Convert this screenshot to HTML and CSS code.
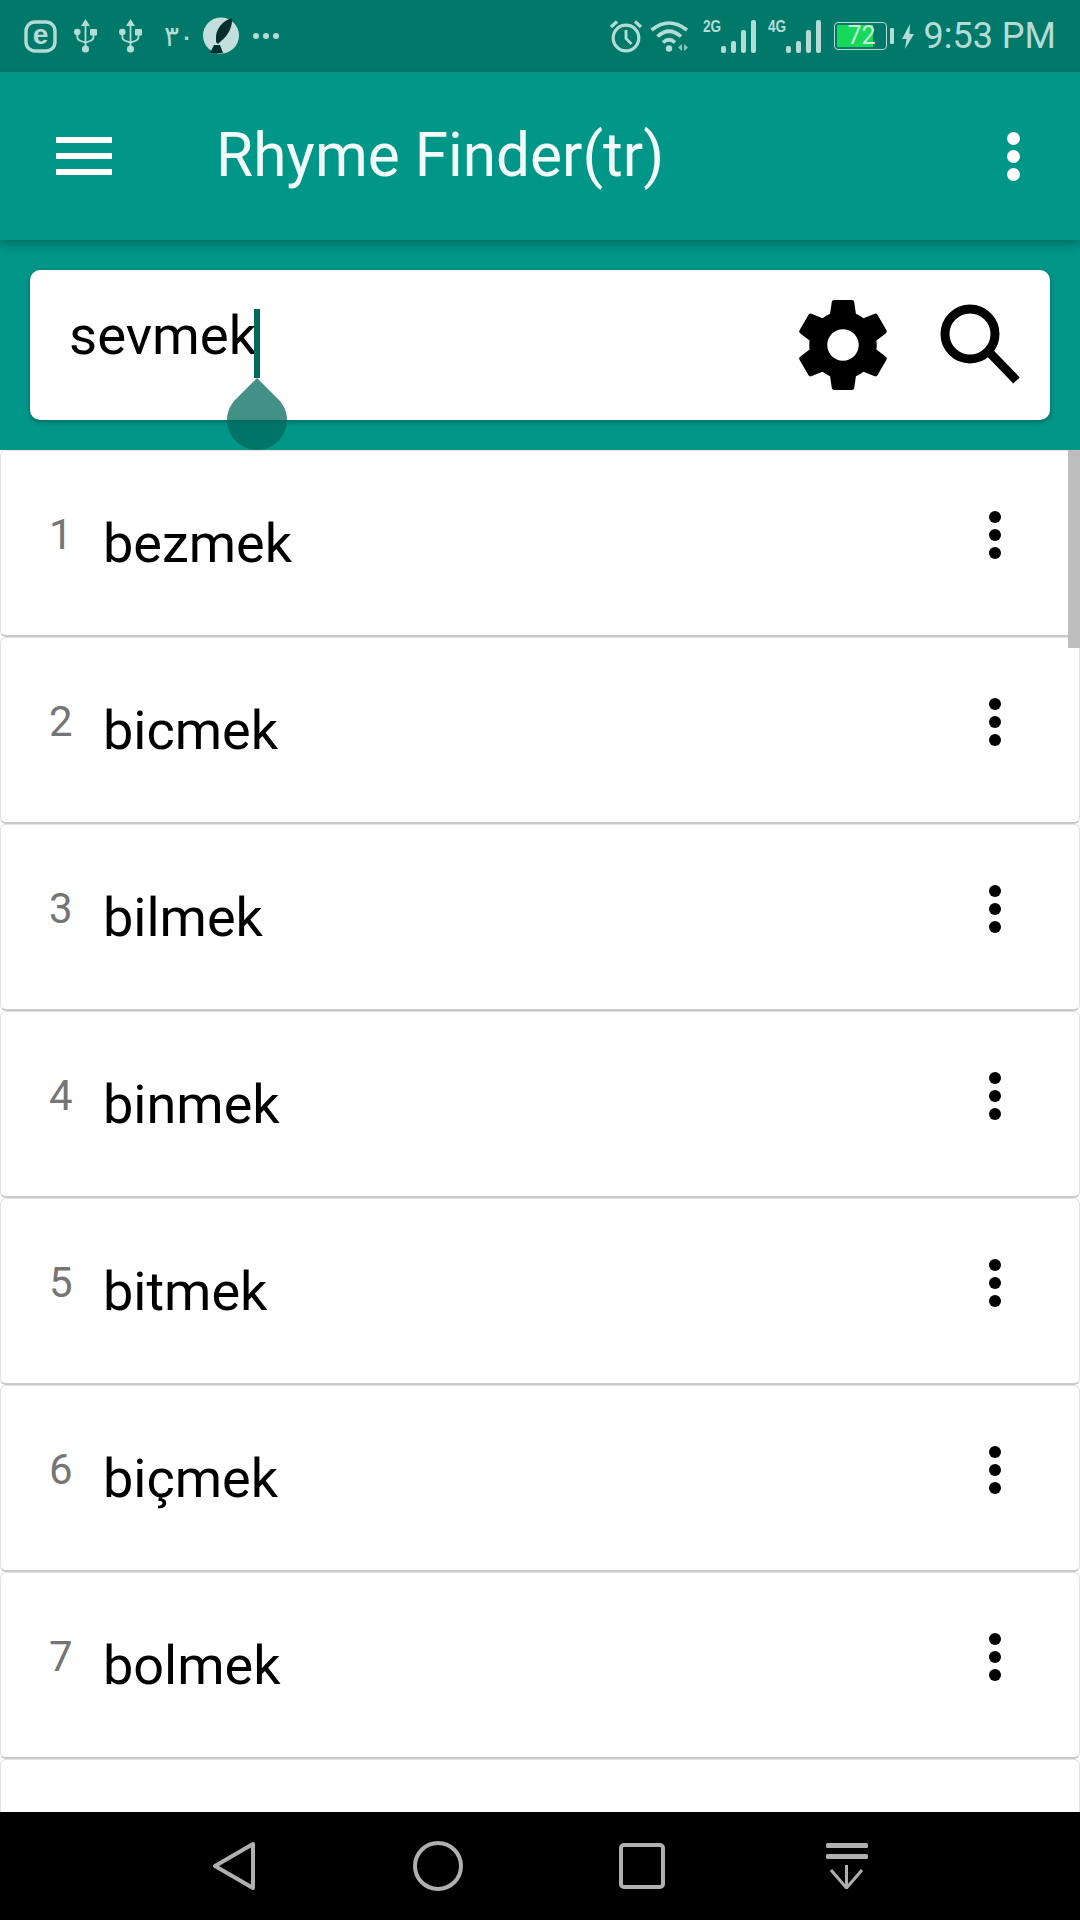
FILE: index.html
```html
<!DOCTYPE html>
<html lang="en">

<head>
    <meta charset="UTF-8">
    <meta name="viewport" content="width=device-width, initial-scale=1.0">
    <title>Rhyme Finder(tr)</title>
    <link rel="stylesheet" href="styles.css">
</head>

<body>
    <div class="screen">
        <!-- status bar -->
        <div class="status">
            <div class="status-left">
                <svg class="ic-e" viewBox="0 0 33 33"><rect x="2" y="2" width="29" height="29" rx="9" fill="none" stroke="#b5dbd5" stroke-width="3.400"/><text x="16.500" y="24" text-anchor="middle" class="e-letter">e</text></svg>
                <svg class="ic-usb" viewBox="0 0 23 34"><g fill="#b5dbd5"><path d="M11.500 0l4.500 7h-3.600v20h-1.800V7H7z"/><circle cx="11.500" cy="30" r="3.600"/><circle cx="3.300" cy="13" r="3.300"/><rect x="16" y="10" width="7" height="6.400" rx="1"/></g><path d="M3.300 14v3.500q0 3.500 3.500 4.500l4.700 1.600M19.500 14v3.500q0 3.500-3.500 4.500l-4.500 1.600" fill="none" stroke="#b5dbd5" stroke-width="1.800"/></svg>
                <svg class="ic-usb" viewBox="0 0 23 34"><g fill="#b5dbd5"><path d="M11.500 0l4.500 7h-3.600v20h-1.800V7H7z"/><circle cx="11.500" cy="30" r="3.600"/><circle cx="3.300" cy="13" r="3.300"/><rect x="16" y="10" width="7" height="6.400" rx="1"/></g><path d="M3.300 14v3.500q0 3.500 3.500 4.500l4.700 1.600M19.500 14v3.500q0 3.500-3.500 4.500l-4.500 1.600" fill="none" stroke="#b5dbd5" stroke-width="1.800"/></svg>
                <span class="arabic">٣٠</span>
                <svg class="ic-quill" viewBox="0 0 38 38"><circle cx="19" cy="18.500" r="18" fill="#c3dfdb"/><path d="M30 1C22 3 15 10 14 19l0 6 2 2 3-3C25 20 31 10 30 1z" fill="#06302e"/><path d="M12 28h6l3 8H8z" fill="#06302e"/></svg>
                <div class="more-dots"><i></i><i></i><i></i></div>
            </div>
            <div class="status-right">
                <svg class="ic-alarm" viewBox="0 0 34 34"><g fill="none" stroke="#b5dbd5"><circle cx="17" cy="19" r="12.800" stroke-width="3.200"/><path d="M17 11v8.500l5.500 5.500" stroke-width="2.800"/><path d="M2 8l6-5.500M32 8l-6-5.500" stroke-width="3.200"/></g></svg>
                <svg class="ic-wifi" viewBox="0 0 40 33"><g fill="none" stroke="#b5dbd5" stroke-width="3.600"><path d="M1.500 10Q19-4 37 10"/><path d="M7.500 16.500Q19 6 31 16.500"/><path d="M13 22.500Q19 17 25 22.500"/></g><circle cx="19" cy="28.500" r="3.200" fill="#b5dbd5"/><path d="M32 24v7l-4-3.500zM34 24v7l4-3.500z" fill="#8fc4bb"/></svg>
                <div class="signal">
                    <span class="net">2G</span>
                    <div class="bars"><i class="b1"></i><i class="b2"></i><i class="b3"></i><i class="b4"></i></div>
                </div>
                <div class="signal">
                    <span class="net">4G</span>
                    <div class="bars"><i class="b1"></i><i class="b2"></i><i class="b3"></i><i class="b4"></i></div>
                </div>
                <div class="battery">
                    <div class="battery-body">
                        <div class="battery-fill"></div>
                        <span class="battery-text">72</span>
                    </div>
                    <div class="battery-nub"></div>
                </div>
                <svg class="ic-bolt" viewBox="0 0 12 25"><path d="M8 0L0 15h4.500L3 25l9-15H7.500z" fill="#b5dbd5"/></svg>
                <span class="time">9:53 PM</span>
            </div>
        </div>

        <!-- app bar -->
        <div class="appbar">
            <div class="menu-btn"><i></i><i></i><i></i></div>
            <div class="title">Rhyme Finder(tr)</div>
            <div class="app-more"><i></i><i></i><i></i></div>
        </div>

        <!-- search -->
        <div class="search-area">
            <div class="search-card">
                <div class="input">sevmek<span class="caret"></span></div>
                <svg class="ic-gear" viewBox="0 0 24 24"><path d="M19.43 12.98c.04-.32.07-.64.07-.98s-.03-.66-.07-.98l2.11-1.65c.19-.15.24-.42.12-.64l-2-3.46c-.12-.22-.39-.3-.61-.22l-2.49 1c-.52-.4-1.08-.73-1.69-.98l-.38-2.65C14.46 2.18 14.25 2 14 2h-4c-.25 0-.46.18-.49.42l-.38 2.65c-.61.25-1.17.59-1.69.98l-2.49-1c-.23-.09-.49 0-.61.22l-2 3.46c-.13.22-.07.49.12.64l2.11 1.65c-.04.32-.07.65-.07.98s.03.66.07.98l-2.11 1.65c-.19.15-.24.42-.12.64l2 3.46c.12.22.39.3.61.22l2.49-1c.52.4 1.08.73 1.69.98l.38 2.65c.03.24.24.42.49.42h4c.25 0 .46-.18.49-.42l.38-2.65c.61-.25 1.17-.59 1.69-.98l2.49 1c.23.09.49 0 .61-.22l2-3.46c.12-.22.07-.49-.12-.64l-2.11-1.65zM12 15.500c-1.930 0-3.500-1.570-3.500-3.500s1.570-3.500 3.500-3.500 3.500 1.570 3.500 3.500-1.570 3.500-3.500 3.500z"/></svg>
                <svg class="ic-search" viewBox="0 0 84 84"><circle cx="33" cy="32" r="25" fill="none" stroke="#000" stroke-width="9"/><path d="M53 51l26.500 27.500" fill="none" stroke="#000" stroke-width="9"/></svg>
            </div>
            <svg class="handle" viewBox="0 0 60 72"><path d="M30 0L9 21C3 27 0 34 0 42a30 30 0 0 0 60 0c0-8-3-15-9-21z" fill="#00695c" fill-opacity=".74"/></svg>
        </div>

        <!-- result list -->
        <div class="list">
            <div class="row"><span class="num">1</span><span class="word">bezmek</span><div class="row-more"><i></i><i></i><i></i></div></div>
            <div class="row"><span class="num">2</span><span class="word">bicmek</span><div class="row-more"><i></i><i></i><i></i></div></div>
            <div class="row"><span class="num">3</span><span class="word">bilmek</span><div class="row-more"><i></i><i></i><i></i></div></div>
            <div class="row"><span class="num">4</span><span class="word">binmek</span><div class="row-more"><i></i><i></i><i></i></div></div>
            <div class="row"><span class="num">5</span><span class="word">bitmek</span><div class="row-more"><i></i><i></i><i></i></div></div>
            <div class="row"><span class="num">6</span><span class="word">biçmek</span><div class="row-more"><i></i><i></i><i></i></div></div>
            <div class="row"><span class="num">7</span><span class="word">bolmek</span><div class="row-more"><i></i><i></i><i></i></div></div>
            <div class="row"></div>
            <div class="scrollbar"></div>
        </div>

        <!-- navigation bar -->
        <div class="navbar">
            <svg class="ic-back" viewBox="0 0 44 50"><path d="M41 3L3 25l38 22z" fill="none" stroke="#b0b0b0" stroke-width="4" stroke-linejoin="round"/></svg>
            <svg class="ic-home" viewBox="0 0 50 50"><circle cx="25" cy="25" r="23" fill="none" stroke="#b0b0b0" stroke-width="4"/></svg>
            <svg class="ic-recent" viewBox="0 0 46 46"><rect x="2" y="2" width="42" height="42" rx="3" fill="none" stroke="#b0b0b0" stroke-width="4"/></svg>
            <svg class="ic-hide" viewBox="0 0 42 46"><g fill="#b0b0b0"><rect x="0" y="0" width="42" height="5" rx="1.500"/><rect x="0" y="11" width="42" height="5" rx="1.500"/></g><path d="M20.500 22v22M5 27l15.500 18L36 27" fill="none" stroke="#b0b0b0" stroke-width="3"/></svg>
        </div>
    </div>
</body>

</html>
```

FILE: styles.css
```css
* {
    margin: 0;
    padding: 0;
    box-sizing: border-box;
}

body {
    font-family: Roboto, "Liberation Sans", sans-serif;
    background-color: #fff;
}

.screen {
    width: 1080px;
    height: 1920px;
    overflow: hidden;
    display: flex;
    flex-direction: column;
}

/* status bar */
.status {
    height: 72px;
    flex-shrink: 0;
    background-color: #00796b;
    display: flex;
    justify-content: space-between;
    align-items: center;
    padding: 0 24px 0 24px;
}

.status-left,
.status-right {
    display: flex;
    align-items: center;
}

.ic-e {
    width: 33px;
    height: 33px;
    margin-right: 17px;
}

.e-letter {
    font-family: "Liberation Sans", sans-serif;
    font-size: 28px;
    font-weight: bold;
    fill: #b5dbd5;
}

.ic-usb {
    width: 23px;
    height: 34px;
    margin-right: 22px;
}

.arabic {
    font-family: "DejaVu Sans", sans-serif;
    font-size: 28px;
    color: #b5dbd5;
    width: 38px;
}

.ic-quill {
    width: 38px;
    height: 38px;
    margin-right: 13px;
}

.more-dots {
    display: flex;
    gap: 4px;
}

.more-dots i {
    width: 6px;
    height: 6px;
    border-radius: 50%;
    background-color: #b5dbd5;
}

.ic-alarm {
    width: 34px;
    height: 34px;
    margin-right: 7px;
}

.ic-wifi {
    width: 40px;
    height: 33px;
    margin-right: 13px;
}

.signal {
    display: flex;
    align-items: flex-end;
    height: 34px;
    margin-right: 12px;
}

.net {
    font-family: "Liberation Sans", sans-serif;
    font-size: 17px;
    font-weight: bold;
    line-height: 15px;
    color: #b5dbd5;
    align-self: flex-start;
    width: 18px;
    transform: scaleX(.8);
    transform-origin: left;
}

.bars {
    display: flex;
    align-items: flex-end;
    gap: 5px;
}

.bars i {
    width: 5px;
    background-color: #b5dbd5;
    border-radius: 2px;
}

.b1 { height: 7px; }
.b2 { height: 12px; }
.b3 { height: 23px; }
.b4 { height: 33px; }

.battery {
    display: flex;
    align-items: center;
    margin-left: 1px;
    margin-right: 8px;
}

.battery-body {
    width: 53px;
    height: 28px;
    border: 1.5px solid #b5dbd5;
    border-radius: 4px;
    padding: 2px;
    position: relative;
}

.battery-fill {
    width: 36px;
    height: 100%;
    background-color: #16d95a;
}

.battery-text {
    position: absolute;
    left: 13px;
    top: 0;
    font-size: 25px;
    line-height: 25px;
    color: #c5ecd9;
}

.battery-nub {
    width: 4px;
    height: 16px;
    background-color: #b5dbd5;
    border-radius: 1px;
    margin-left: 3px;
}

.ic-bolt {
    width: 12px;
    height: 25px;
    margin-right: 10px;
}

.time {
    font-size: 36px;
    color: #b5dbd5;
    white-space: nowrap;
}

/* app bar */
.appbar {
    height: 168px;
    flex-shrink: 0;
    background-color: #009688;
    display: flex;
    align-items: center;
    padding: 0 0 0 56px;
    position: relative;
    z-index: 1;
    box-shadow: 0 4px 10px rgba(0, 0, 0, .28);
}

.menu-btn {
    width: 56px;
    height: 38px;
    display: flex;
    flex-direction: column;
    justify-content: space-between;
}

.menu-btn i {
    display: block;
    height: 6px;
    background-color: #fff;
}

.title {
    margin-left: 104px;
    margin-bottom: 2px;
    font-size: 60.3px;
    color: #f2fbf9;
    flex: 1;
    white-space: nowrap;
}

.app-more {
    width: 13px;
    margin-right: 60px;
    display: flex;
    flex-direction: column;
    gap: 5px;
}

.app-more i {
    width: 13px;
    height: 13px;
    border-radius: 50%;
    background-color: #fff;
}

/* search */
.search-area {
    height: 210px;
    flex-shrink: 0;
    background-color: #009688;
    padding: 30px;
    position: relative;
}

.search-card {
    height: 150px;
    background-color: #fff;
    border-radius: 10px;
    box-shadow: 0 2px 5px rgba(0, 0, 0, .3);
    display: flex;
    align-items: center;
    padding-left: 39px;
    position: relative;
}

.input {
    flex: 1;
    font-size: 54.5px;
    line-height: 64px;
    color: #000;
    margin-bottom: 20px;
}

/* the caret hangs over the card, below the text line */
.caret {
    position: absolute;
    left: 224px;
    top: 39px;
    width: 6px;
    height: 69px;
    background-color: #00695c;
}

.ic-gear {
    width: 108px;
    height: 108px;
    margin-right: 40px;
}

.ic-search {
    width: 84px;
    height: 84px;
    margin: 0 29px 3px 0;
}

.handle {
    position: absolute;
    left: 227px;
    top: 138px;
    width: 60px;
    height: 72px;
}

/* list */
.list {
    flex: 1;
    overflow: hidden;
    position: relative;
    background-color: #fff;
}

.row {
    height: 187px;
    background-color: #fff;
    border: 1px solid #e2e2e2;
    border-bottom: 2px solid #c9c9c9;
    border-radius: 6px;
    display: flex;
    align-items: flex-start;
    padding: 60px 0 0 48px;
}

.num {
    width: 54px;
    font-size: 42px;
    line-height: 48px;
    color: #757575;
}

.word {
    flex: 1;
    font-size: 54px;
    line-height: 64px;
    color: #000;
    margin-top: 1px;
}

.row-more {
    width: 12px;
    margin-right: 78px;
    display: flex;
    flex-direction: column;
    gap: 6px;
}

.row-more i {
    width: 12px;
    height: 12px;
    border-radius: 50%;
    background-color: #000;
}

.scrollbar {
    position: absolute;
    right: 0;
    top: 0;
    width: 12px;
    height: 198px;
    background-color: #bdbdbd;
}

/* navigation bar */
.navbar {
    height: 108px;
    flex-shrink: 0;
    background-color: #000;
    display: flex;
    align-items: center;
    padding-left: 212px;
}

.ic-back {
    width: 44px;
    height: 50px;
    margin-right: 157px;
}

.ic-home {
    width: 50px;
    height: 50px;
    margin-right: 156px;
}

.ic-recent {
    width: 46px;
    height: 46px;
    margin-right: 161px;
}

.ic-hide {
    width: 42px;
    height: 46px;
}
```
